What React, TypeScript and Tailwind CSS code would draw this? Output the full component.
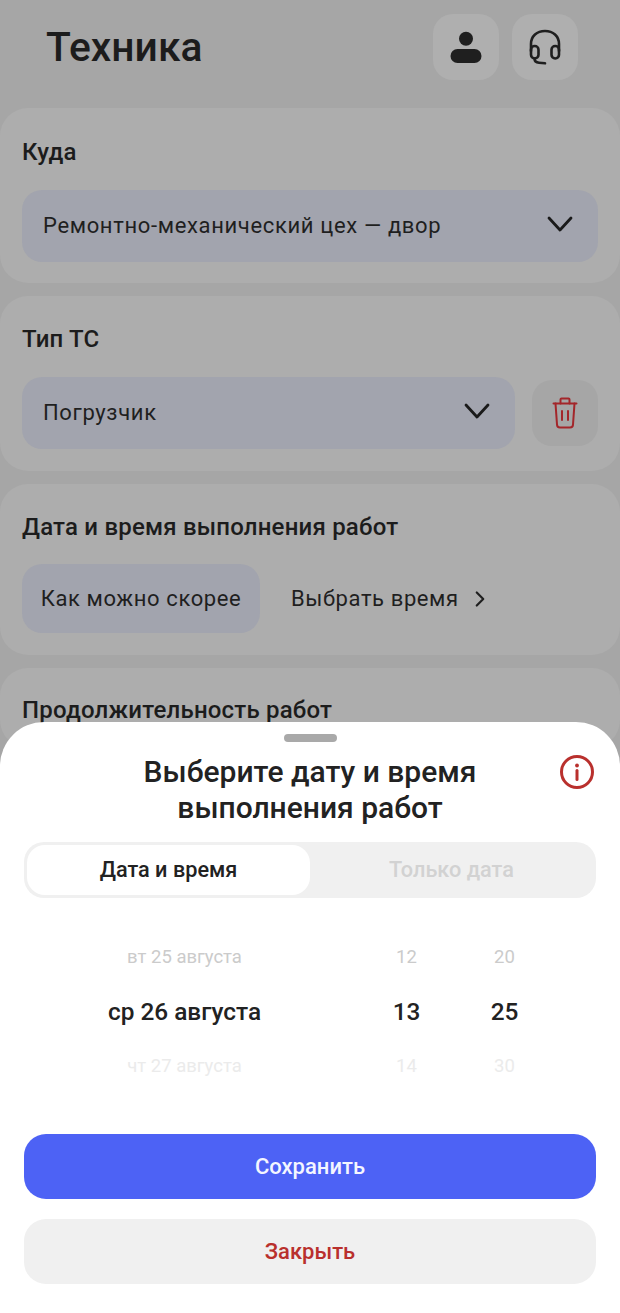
import { ChevronRight } from "lucide-react";

function UserIcon() {
  return (
    <svg width="34" height="34" viewBox="0 0 34 34" fill="#1f1f1f">
      <circle cx="17" cy="8.7" r="7" />
      <rect x="1.5" y="19" width="31" height="14" rx="7" />
    </svg>
  );
}

function HeadsetIcon() {
  return (
    <svg width="32" height="36" viewBox="0 0 32 36" fill="none" stroke="#1f1f1f" strokeWidth="2.6" strokeLinecap="round">
      <path d="M2 22v-7C2 7 8 2 16 2s14 5 14 13v7" />
      <rect x="2" y="17" width="7.5" height="12.5" rx="3.7" />
      <rect x="22.5" y="17" width="7.5" height="12.5" rx="3.7" />
      <path d="M5.5 29.5c0 3 2 4 4.5 4.2l6 .6" />
    </svg>
  );
}

function TrashIcon() {
  return (
    <svg width="26" height="32" viewBox="0 0 26 32" fill="none" stroke="#a3262a" strokeWidth="2" strokeLinecap="round" strokeLinejoin="round">
      <path d="M1.5 6.5h23" />
      <path d="M8.5 6.5V2.5a1 1 0 0 1 1-1h7a1 1 0 0 1 1 1v4" />
      <path d="M3.5 6.5l1.5 21a3 3 0 0 0 3 3h10a3 3 0 0 0 3-3l1.5-21" />
      <path d="M10 14v9M16 14v9" />
    </svg>
  );
}

function InfoIcon() {
  return (
    <svg width="36" height="36" viewBox="0 0 36 36" fill="none" stroke="#b9302d" strokeWidth="3">
      <circle cx="18" cy="18" r="15.5" />
      <circle cx="18" cy="11.5" r="1.9" fill="#b9302d" stroke="none" />
      <path d="M18 16.5v9" strokeLinecap="round" />
    </svg>
  );
}

function Chevron() {
  return (
    <svg width="26" height="18" viewBox="0 0 26 18" fill="none" stroke="#1a1a1a" strokeWidth="2.8" strokeLinecap="round" strokeLinejoin="round" className="-mt-[4px]">
      <path d="M2 3l11 12L24 3" />
    </svg>
  );
}

function Select({ label }: { label: string }) {
  return (
    <div className="flex h-[72px] flex-1 items-center justify-between rounded-[20px] bg-[#a2a4ae] pl-[21px] pr-[25px]">
      <span className="-mt-[1px] text-[22px] tracking-[0.65px] text-[#1f1f1f]">{label}</span>
      <Chevron />
    </div>
  );
}

export default function App() {
  return (
    <div className="relative h-[1313px] w-[620px] overflow-hidden bg-[#a6a6a6] font-['Roboto',sans-serif]">
      <header className="flex h-[108px] items-start justify-between pl-[46px] pr-[42px] pt-[14px]">
        <h1 className="mt-[7px] text-[40.8px] leading-[52px] font-medium text-[#1c1c1c]">Техника</h1>
        <div className="flex gap-[13px]">
          <button className="flex h-[66px] w-[66px] items-center justify-center rounded-[20px] bg-[#afafaf]">
            <UserIcon />
          </button>
          <button className="flex h-[66px] w-[66px] items-center justify-center rounded-[20px] bg-[#afafaf]">
            <HeadsetIcon />
          </button>
        </div>
      </header>

      <main className="flex flex-col gap-[13px]">
        <section className="rounded-[28px] bg-[#adadad] px-[22px] pb-[21px] pt-[28px]">
          <h2 className="mb-[22px] text-[24px] leading-[32px] font-medium tracking-[0.2px] text-[#1c1c1c]">Куда</h2>
          <Select label="Ремонтно-механический цех — двор" />
        </section>
        <section className="rounded-[28px] bg-[#adadad] px-[22px] pb-[22px] pt-[27px]">
          <h2 className="mb-[22px] text-[24px] leading-[32px] font-medium tracking-[0.2px] text-[#1c1c1c]">Тип ТС</h2>
          <div className="flex items-center gap-[17px]">
            <Select label="Погрузчик" />
            <button className="flex h-[66px] w-[66px] items-center justify-center rounded-[20px] bg-[#a6a6a6]">
              <TrashIcon />
            </button>
          </div>
        </section>
        <section className="rounded-[28px] bg-[#adadad] px-[22px] pb-[22px] pt-[27px]">
          <h2 className="mb-[21px] text-[24px] leading-[32px] font-medium tracking-[0.2px] text-[#1c1c1c]">
            Дата и время выполнения работ
          </h2>
          <div className="flex items-center">
            <div className="flex h-[69px] w-[238px] items-center justify-center rounded-[20px] bg-[#a2a4ae] text-[22px] tracking-[0.6px] text-[#1f1f1f]">
              Как можно скорее
            </div>
            <div className="ml-[31px] flex items-center gap-[8px] text-[22px] tracking-[0.6px] text-[#1f1f1f]">
              Выбрать время
              <ChevronRight size={26} strokeWidth={2} color="#1f1f1f" />
            </div>
          </div>
        </section>
        <section className="rounded-[28px] bg-[#adadad] px-[22px] pb-[22px] pt-[26px]">
          <h2 className="text-[24px] leading-[32px] font-medium tracking-[0.2px] text-[#1c1c1c]">Продолжительность работ</h2>
        </section>
      </main>

      {/* Bottom sheet */}
      <div className="absolute inset-x-0 bottom-0 h-[591px] rounded-t-[44px] bg-white px-[24px]">
        <div className="mx-auto mt-[12px] h-[8px] w-[53px] rounded-full bg-[#a9a9a9]" />
        <div className="relative mt-[12px]">
          <h3 className="text-center text-[30px] leading-[36px] font-medium text-[#222222]">
            Выберите дату и время
            <br />
            выполнения работ
          </h3>
          <div className="absolute right-[1px] top-0">
            <InfoIcon />
          </div>
        </div>
        <div className="mt-[16px] flex h-[56px] rounded-[20px] bg-[#f0f0f0] p-[3px]">
          <div className="flex w-[283px] items-center justify-center rounded-[18px] bg-white text-[21.7px] font-medium text-[#222222]">
            Дата и время
          </div>
          <div className="flex flex-1 items-center justify-center text-[21.7px] font-medium text-[#d2d2d2]">
            Только дата
          </div>
        </div>

        <div className="mt-[32px] flex flex-col">
          <div className="flex h-[55px] items-center text-[18.5px] text-[#cbcbcb]">
            <span className="w-[321px] text-center">вт 25 августа</span>
            <span className="w-[123px] text-center">12</span>
            <span className="w-[73px] text-center">20</span>
          </div>
          <div className="flex h-[55px] items-center text-[24.4px] font-medium text-[#222222]">
            <span className="w-[321px] text-center">ср 26 августа</span>
            <span className="w-[123px] text-center">13</span>
            <span className="w-[73px] text-center">25</span>
          </div>
          <div className="flex h-[54px] items-center text-[18.5px] text-[#ebebeb]">
            <span className="w-[321px] text-center">чт 27 августа</span>
            <span className="w-[123px] text-center">14</span>
            <span className="w-[73px] text-center">30</span>
          </div>
        </div>

        <button className="mt-[40px] block h-[65px] w-full rounded-[22px] bg-[#4d62f5] text-[22px] font-medium text-[#f4f6ff]">
          Сохранить
        </button>
        <button className="mt-[20px] block h-[65px] w-full rounded-[22px] bg-[#f0f0f0] text-[22px] font-medium text-[#b9302d]">
          Закрыть
        </button>
      </div>
    </div>
  );
}
